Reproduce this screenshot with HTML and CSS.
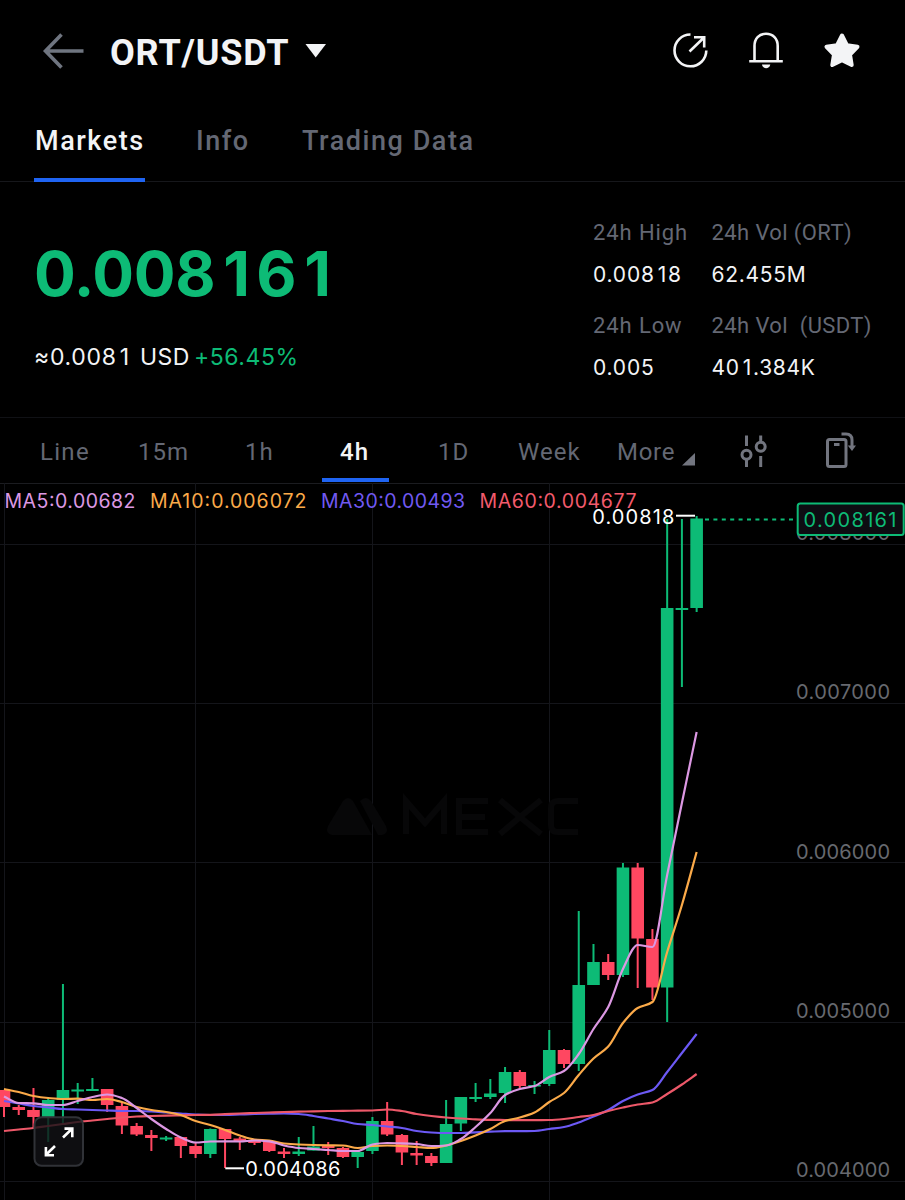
FILE: index.html
```html
<!doctype html>
<html lang="en">
    <head>
        <meta charset="utf-8">
        <title>ORT/USDT</title>
        <link rel="stylesheet" href="styles.css">
    </head>
    <body>
        <header class="topbar">
            <svg class="back" width="42" height="36" viewBox="0 0 42 36">
                <path d="M41.500 18H3M19.500 1.500L3.500 18L19.500 34.500" />
            </svg>
            <h1 class="pair">ORT/USDT</h1>
            <svg class="caret" width="22" height="14" viewBox="0 0 22 14"><path d="M0.500 0H21L10.700 13.500z" /></svg>
            <div class="actions">
                <svg width="40" height="40" viewBox="0 0 40 40">
                    <path d="M20.500 3.500A15.900 15.900 0 1 0 36.300 19.500" />
                    <path d="M19.500 20.500L33.500 7M24 6.300H34.200V16.500" />
                </svg>
                <svg width="40" height="40" viewBox="0 0 40 40">
                    <path d="M8.500 30V15C8.500 7.500 13 2.800 20 2.800S31.700 7.500 31.700 15V30" />
                    <path d="M3.200 30.300H36.800" />
                    <path class="solid" d="M16 33.500H24.300C23.500 38.500 16.800 38.500 16 33.500z" />
                </svg>
                <svg width="40" height="40" viewBox="0 0 40 40">
                    <path class="star" d="M20 4.500L24.900 14.200L35.500 15.800L28 23.500L29.700 34L20 29.200L10.300 34L12 23.500L4.500 15.800L15.100 14.200z" />
                </svg>
            </div>
        </header>

        <nav class="tabs">
            <a class="tab active">Markets</a>
            <a class="tab info">Info</a>
            <a class="tab trading">Trading Data</a>
        </nav>

        <section class="ticker">
            <div class="quote">
                <div class="price">0.008<span class="one">1</span>6<span class="one">1</span></div>
                <div class="fiat">≈0.008<span class="thin">1</span> <span class="usd">USD</span> <span class="change">+56.45%</span></div>
            </div>
            <dl class="stats">
                <div><dt>24h High</dt><dd>0.008<span class="thin">1</span>8</dd></div>
                <div class="vol"><dt>24h Vol (ORT)</dt><dd>62.455M</dd></div>
                <div><dt>24h Low</dt><dd>0.005</dd></div>
                <div class="vol"><dt>24h Vol&nbsp; (USDT)</dt><dd>40<span class="thin">1</span>.384K</dd></div>
            </dl>
        </section>

        <nav class="intervals">
            <a class="line">Line</a>
            <a class="m15">15m</a>
            <a class="h1">1h</a>
            <a class="h4 active">4h</a>
            <a class="d1">1D</a>
            <a class="week">Week</a>
            <a class="more">More</a>
            <svg class="corner" width="13" height="13" viewBox="0 0 13 13"><path d="M13 0V12.500H0z" /></svg>
            <svg class="sliders" width="28" height="34" viewBox="0 0 28 34">
                <path d="M6.500 1.500V12M6.500 25V33M20.700 1.500V8M20.700 22V33" />
                <circle cx="6.500" cy="20.700" r="4.500" />
                <circle cx="20.700" cy="12.700" r="4.500" />
            </svg>
            <svg class="rotate" width="31" height="37" viewBox="0 0 31 37">
                <rect x="2.500" y="7.500" width="18.500" height="27" rx="2" />
                <path d="M9 12.500H14.500M16.500 2H21C25 2 27 4.500 27 8V14" />
                <path class="tip" d="M22.800 13.500H31L27 19z" />
            </svg>
        </nav>

        <main class="chart">
            <svg id="chart" width="905" height="717" viewBox="0 483 905 717">
                <g class="grid">
                    <path d="M0 544.500H905M0 703.500H905M0 862.500H905M0 1022.500H905M0 1181.500H905" />
                    <path d="M4.500 483V1200M195.500 483V1200M372.500 483V1200M549.500 483V1200" />
                </g>
                <g class="watermark">
                    <path d="M343 801Q348 795 353 801L372 835H332Q325 834 328 826z" />
                    <path d="M360 801Q366 795 371 801L386 826Q389 834 382 835H378z" />
                    <path class="mark" d="M406 834V801L425 823L444 801V834M488 801H459V832H488M459 817H485M500 800L520 817L500 834M541 800L520 817L541 834M578 801H558Q551 801 551 808V825Q551 832 558 832H578" />
                </g>
                <g class="legend">
                    <text class="ma5" x="4.500" y="507.500" textLength="131">MA5:0.00682</text>
                    <text class="ma10" x="150" y="507.500" textLength="156.500">MA10:0.006072</text>
                    <text class="ma30" x="321" y="507.500" textLength="144">MA30:0.00493</text>
                    <text class="ma60" x="479.500" y="507.500" textLength="157">MA60:0.004677</text>
                </g>
                <g class="axis">
                    <text x="796" y="540" textLength="94">0.008000</text>
                    <text x="796" y="699" textLength="94">0.007000</text>
                    <text x="796" y="858.500" textLength="94">0.006000</text>
                    <text x="796" y="1017.500" textLength="94">0.005000</text>
                    <text x="796" y="1177" textLength="94">0.004000</text>
                </g>
                <g id="candles"></g>
                <g id="averages"></g>
                <g class="extremes">
                    <text x="592.300" y="523.500" textLength="82">0.00818</text>
                    <path d="M676 515.700H695" />
                    <text x="245.300" y="1176" textLength="95">0.004086</text>
                    <path d="M225.300 1168.300H244" />
                </g>
                <path class="last-line" d="M705 519.500H795" />
                <g class="last-price">
                    <rect x="797.700" y="503.500" width="106" height="31.500" rx="2.500" />
                    <text x="803.500" y="527" textLength="93">0.008161</text>
                </g>
                <g class="expand">
                    <rect x="34.500" y="1117.300" width="48.500" height="48.500" rx="7" />
                    <path d="M63 1137.500L72 1128.800M64.500 1128.600H72.300V1137.200M55 1146L46 1154.800M45.900 1147V1155.200H54" />
                </g>
            </svg>
        </main>
        <script src="chart.js"></script>
    </body>
</html>
```

FILE: styles.css
```css
* {
    box-sizing: border-box;
    margin: 0;
    padding: 0;
}
body {
    width: 905px;
    height: 1200px;
    overflow: hidden;
    background: #000;
    color: #f3f4f6;
    font-family: Roboto, "Liberation Sans", sans-serif;
}
svg {
    display: block;
    flex: none;
    fill: none;
}

/* header */
.topbar {
    display: flex;
    align-items: center;
    height: 102px;
    padding: 0 43px 0 42px;
}
.back {
    stroke: #6f7580;
    stroke-width: 3.6;
}
.pair {
    margin-left: 26px;
    padding-top: 3px;
    font-size: 36px;
    font-weight: 700;
    letter-spacing: 0.8px;
    line-height: 40px;
}
.caret {
    margin-left: 16px;
    fill: #f3f4f6;
}
.actions {
    display: flex;
    gap: 36px;
    margin-left: auto;
    stroke: #f3f4f6;
    stroke-width: 2.6;
}
.solid {
    fill: #f3f4f6;
    stroke: none;
}
.star {
    fill: #f3f4f6;
    stroke-width: 4;
    stroke-linejoin: round;
}

/* page tabs */
.tabs {
    display: flex;
    height: 80px;
    padding-left: 34px;
    border-bottom: 1px solid #16171b;
    color: #646874;
    font-size: 27px;
    font-weight: 500;
    letter-spacing: 1.55px;
}
.tab {
    height: 80px;
    padding-left: 1px;
    line-height: 78px;
    white-space: nowrap;
}
.tabs .active {
    width: 111px;
    border-bottom: 4px solid #1f64f2;
    color: #f3f4f6;
}
.info {
    width: 106px;
    margin-left: 50px;
}

/* price and 24h figures */
.ticker {
    display: flex;
    justify-content: space-between;
    height: 236px;
    padding: 38px 20px 0 34px;
    border-bottom: 1px solid #101115;
}
.price {
    color: #0dbb76;
    font-family: Inter, sans-serif;
    font-size: 62px;
    font-weight: 700;
    letter-spacing: -0.3px;
    line-height: 108px;
}
/* keeps the narrow digit on the same pitch as the others */
.one {
    display: inline-block;
    width: 41px;
    padding-left: 8px;
}
.thin {
    margin: 0 1px 0 3px;
}
.fiat {
    font-family: Inter, sans-serif;
    font-size: 23px;
    letter-spacing: 0.7px;
    line-height: 58px;
    white-space: nowrap;
}
.usd {
    margin-left: 2px;
    letter-spacing: 0.5px;
}
.change {
    margin-left: -3px;
    color: #0dbb76;
    letter-spacing: 0.55px;
}
.stats {
    display: grid;
    grid-template-columns: 118.5px 174px;
    align-content: start;
    width: 292px;
}
.stats div {
    height: 93px;
}
.stats dt {
    color: #646874;
    font-size: 22px;
    letter-spacing: 0.9px;
    line-height: 26px;
    white-space: nowrap;
}
.stats .vol dt {
    letter-spacing: 0.4px;
}
.stats dd {
    padding-top: 16px;
    font-family: Inter, sans-serif;
    font-size: 21px;
    letter-spacing: 0.8px;
    line-height: 26px;
}
.stats .vol dd {
    letter-spacing: 0.7px;
}

/* interval picker */
.intervals {
    display: flex;
    height: 65px;
    padding-left: 40px;
    color: #646874;
    font-size: 24px;
    letter-spacing: 1px;
    line-height: 69px;
}
.line {
    width: 98px;
    letter-spacing: 1.3px;
}
.m15 {
    width: 107px;
}
.h1 {
    width: 77px;
}
.h4 {
    width: 67px;
    padding-left: 18px;
    font-weight: 500;
}
.intervals .active {
    height: 64px;
    border-bottom: 4px solid #1f64f2;
    color: #f3f4f6;
}
.d1 {
    width: 80px;
    margin-left: 49px;
}
.d1,
.week,
.more {
    flex: none;
}
.week {
    width: 99px;
}
.more {
    width: 65px;
    letter-spacing: 0.7px;
}
.corner {
    margin-top: 35px;
    fill: #72757f;
}
.sliders {
    margin: 16px 0 0 45px;
    stroke: #72757f;
    stroke-width: 3;
}
.rotate {
    margin: 14px 0 0 57px;
    stroke: #72757f;
    stroke-width: 3;
}
.tip {
    fill: #72757f;
    stroke: none;
}

/* chart */
.chart {
    height: 717px;
    border-top: 1px solid #1b1c20;
    font-family: Inter, sans-serif;
    font-size: 20px;
}
.chart svg {
    margin-top: -1px;
}
.grid {
    stroke: #14151a;
}
.watermark {
    fill: #070708;
}
.mark {
    fill: none;
    stroke: #070708;
    stroke-width: 6;
}
.legend {
    font-size: 19.5px;
}
text.ma5 {
    fill: #dc98e3;
}
text.ma10 {
    fill: #fbaa49;
}
text.ma30 {
    fill: #7159f2;
}
text.ma60 {
    fill: #f25a6c;
}
.axis {
    fill: #67696f;
}
.up {
    fill: #0dbb76;
}
.down {
    fill: #ff4761;
}
#averages path {
    stroke-width: 2.2;
    stroke-linejoin: round;
}
path.ma5 {
    stroke: #dc98e3;
}
path.ma10 {
    stroke: #fbaa49;
}
path.ma30 {
    stroke: #6c59f5;
}
path.ma60 {
    stroke: #ed5869;
}
.extremes {
    fill: #fff;
    stroke-width: 2;
}
.extremes text {
    stroke: none;
}
.extremes path {
    stroke: #fff;
}
.last-line {
    stroke: #0dbb76;
    stroke-width: 2;
    stroke-dasharray: 4 4.4;
}
.last-price rect {
    fill: #0d0d12;
    stroke: #0dbb76;
    stroke-width: 2;
}
.last-price text {
    fill: #0dbb76;
}
.expand rect {
    fill: rgba(17, 18, 21, 0.8);
    stroke: #303237;
    stroke-width: 2;
}
.expand path {
    stroke: #fff;
    stroke-width: 2.6;
}
```

FILE: chart.js
```js
const NS = 'http://www.w3.org/2000/svg';
const STEP = 14.737;
const WIDTH = 12.6;

// [up, wick top, body top, body bottom, wick bottom]
const candles = [
    [0, 1090, 1090, 1107, 1117], [0, 1105, 1107, 1110, 1115], [0, 1088, 1110, 1117, 1128],
    [1, 1098, 1100, 1117, 1142], [1, 984, 1090, 1100, 1125], [1, 1083, 1089.5, 1091.5, 1104],
    [1, 1078, 1089, 1091, 1091], [0, 1089, 1089, 1105, 1112], [0, 1103, 1106, 1125.5, 1134],
    [0, 1123, 1126, 1134.5, 1136], [0, 1130, 1135, 1138, 1151], [1, 1136, 1137.5, 1139.5, 1141],
    [0, 1137, 1137, 1146, 1158], [0, 1143, 1146, 1154, 1158], [1, 1128.5, 1129, 1154, 1158],
    [0, 1129, 1129, 1139, 1168], [0, 1137, 1138.5, 1141, 1150], [0, 1139, 1140.5, 1143, 1145],
    [0, 1141, 1141, 1151, 1152], [0, 1148, 1151.5, 1154, 1158], [1, 1137, 1151.5, 1154, 1156],
    [1, 1126, 1146.5, 1150.5, 1150.5], [0, 1142, 1145.5, 1148, 1155], [0, 1147, 1148, 1157, 1158],
    [1, 1150, 1152, 1157, 1168], [1, 1117, 1121, 1151, 1154], [0, 1102, 1121, 1134.5, 1136],
    [0, 1134, 1135, 1152.5, 1165], [0, 1141, 1153, 1155.5, 1165], [0, 1153, 1156, 1163, 1166],
    [1, 1100, 1124, 1163, 1163], [1, 1097, 1097, 1123.5, 1131], [1, 1083, 1097, 1099, 1102],
    [1, 1079, 1093.5, 1097, 1099], [1, 1067, 1072, 1093, 1103], [0, 1070, 1072, 1086, 1089],
    [1, 1081, 1085, 1086.5, 1094], [1, 1030, 1050, 1084, 1086], [0, 1049, 1050, 1064, 1068],
    [1, 911, 985, 1064, 1071], [1, 944, 962, 985, 985], [0, 954, 962, 975, 980],
    [1, 863, 867.5, 975, 977], [0, 863, 867.5, 938.5, 988], [0, 929, 939, 987.5, 1000],
    [1, 519, 608, 987.5, 1022], [1, 519, 608, 610, 687], [1, 516, 518.5, 608, 612]
];

const averages = {
    ma30: [1101, 1103.5, 1106, 1107.5, 1109, 1109.5, 1110, 1110.5, 1111, 1111, 1111.5, 1112.5, 1113.5, 1114.5,
        1115, 1115, 1114.5, 1114, 1113.7, 1113.5, 1114, 1116, 1118.5, 1121, 1124, 1125, 1126.5, 1128, 1131,
        1132.5, 1133, 1133, 1132.3, 1131.7, 1131.2, 1131.2, 1131, 1129, 1127, 1122.5, 1116.5, 1110, 1101,
        1094.5, 1090, 1072, 1053, 1034],
    ma60: [1131, 1129.5, 1128, 1126, 1124, 1122, 1120.5, 1119, 1117.5, 1116.5, 1116, 1115.6, 1115.3, 1115,
        1114.8, 1114.2, 1113.5, 1113, 1112.5, 1112, 1111.7, 1111.3, 1111, 1110.8, 1110.7, 1110.5, 1109.5,
        1111, 1114, 1116, 1117.5, 1118.5, 1119.3, 1119.8, 1120, 1120.2, 1120.2, 1120, 1119, 1117, 1115,
        1111, 1107.5, 1104.5, 1102.5, 1094, 1084.5, 1074],
    ma10: [1089, 1092, 1096, 1098, 1099, 1098.7, 1100, 1099, 1102, 1107, 1110, 1112, 1115, 1121, 1125, 1130,
        1135.5, 1139.5, 1140.5, 1143.5, 1144.5, 1145, 1145.3, 1145.5, 1148, 1146, 1145.5, 1146, 1147, 1148,
        1145.5, 1141, 1135.5, 1129, 1121, 1117.5, 1112.5, 1102, 1093, 1075, 1058.5, 1046.5, 1023, 1008,
        1002, 952, 905, 852],
    ma5: [1096.5, 1103, 1103.3, 1105, 1105, 1101, 1097, 1094.5, 1098, 1108, 1119, 1129, 1137.5, 1142.5,
        1141.5, 1141.3, 1141.5, 1140.5, 1141.3, 1145.5, 1148, 1149, 1150, 1151, 1151, 1144.5, 1143, 1143.3,
        1144, 1146, 1145.5, 1139, 1127, 1113, 1095, 1089, 1086, 1077, 1071, 1054, 1029, 1007, 969, 945,
        947, 875, 803, 732]
};

function add(parent, tag, attrs) {
    const el = document.createElementNS(NS, tag);
    for (const key in attrs) el.setAttribute(key, attrs[key]);
    parent.appendChild(el);
}

function xAt(i) {
    return 4 + i * STEP;
}

// horizontal tangent at peaks, averaged slope elsewhere
function slope(ys, i) {
    if (i === 0 || i === ys.length - 1) {
        return i ? ys[i] - ys[i - 1] : ys[1] - ys[0];
    }
    const a = ys[i] - ys[i - 1];
    const b = ys[i + 1] - ys[i];
    if (a * b <= 0) return 0;
    return 2 * a * b / (a + b);
}

function curve(ys) {
    let d = `M${xAt(0)} ${ys[0]}`;
    for (let i = 1; i < ys.length; i++) {
        const y1 = ys[i - 1] + slope(ys, i - 1) / 3;
        const y2 = ys[i] - slope(ys, i) / 3;
        d += `C${xAt(i - 1) + STEP / 3} ${y1} ${xAt(i) - STEP / 3} ${y2} ${xAt(i)} ${ys[i]}`;
    }
    return d;
}

const candleLayer = document.getElementById('candles');
candles.forEach(([up, high, top, bottom, low], i) => {
    const cls = up ? 'up' : 'down';
    add(candleLayer, 'rect', { class: cls, x: xAt(i) - 1, y: high, width: 2, height: low - high });
    add(candleLayer, 'rect', { class: cls, x: xAt(i) - WIDTH / 2, y: top, width: WIDTH, height: bottom - top });
});

const averageLayer = document.getElementById('averages');
for (const name in averages) {
    add(averageLayer, 'path', { class: name, d: curve(averages[name]) });
}
```
